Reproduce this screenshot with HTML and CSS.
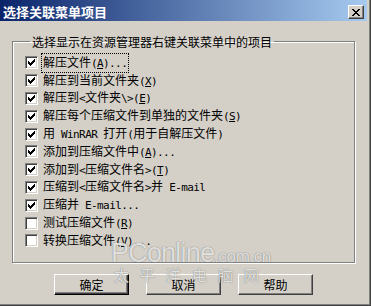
FILE: index.html
```html
<!doctype html>
<html>
<head>
<meta charset=utf-8>
<title>选择关联菜单项目</title>
<link rel="stylesheet" href="styles.css">
</head>
<body>

<div class="window">
  <header class="titlebar">
    <span class="title">选择关联菜单项目</span>
    <span class="close"><svg width="8" height="7" viewBox="0 0 8 7"><path d="M0 0h2v1h-2z M6 0h2v1h-2z M1 1h2v1h-2z M5 1h2v1h-2z M2 2h4v1h-4z M3 3h2v1h-2z M2 4h4v1h-4z M1 5h2v1h-2z M5 5h2v1h-2z M0 6h2v1h-2z M6 6h2v1h-2z"/></svg></span>
  </header>

  <div class="client">
    <fieldset class="group">
      <legend>选择显示在资源管理器右键关联菜单中的项目</legend>
      <ul class="opts">
        <li><span class="cb"><svg viewBox="0 0 7 7"><path d="M6 0h1v1h-1z M5 1h2v1h-2z M0 2h1v1h-1z M4 2h3v1h-3z M0 3h2v1h-2z M3 3h3v1h-3z M0 4h5v1h-5z M1 5h3v1h-3z M2 6h1v1h-1z"/></svg></span><span class="lbl focus">解压文件<span class="en">(<u>A</u>)...</span></span></li>
        <li><span class="cb"><svg viewBox="0 0 7 7"><path d="M6 0h1v1h-1z M5 1h2v1h-2z M0 2h1v1h-1z M4 2h3v1h-3z M0 3h2v1h-2z M3 3h3v1h-3z M0 4h5v1h-5z M1 5h3v1h-3z M2 6h1v1h-1z"/></svg></span><span class="lbl">解压到当前文件夹<span class="en">(<u>X</u>)</span></span></li>
        <li><span class="cb"><svg viewBox="0 0 7 7"><path d="M6 0h1v1h-1z M5 1h2v1h-2z M0 2h1v1h-1z M4 2h3v1h-3z M0 3h2v1h-2z M3 3h3v1h-3z M0 4h5v1h-5z M1 5h3v1h-3z M2 6h1v1h-1z"/></svg></span><span class="lbl">解压到<span class="en">&lt;</span>文件夹<span class="en">\&gt;(<u>E</u>)</span></span></li>
        <li><span class="cb"><svg viewBox="0 0 7 7"><path d="M6 0h1v1h-1z M5 1h2v1h-2z M0 2h1v1h-1z M4 2h3v1h-3z M0 3h2v1h-2z M3 3h3v1h-3z M0 4h5v1h-5z M1 5h3v1h-3z M2 6h1v1h-1z"/></svg></span><span class="lbl">解压每个压缩文件到单独的文件夹<span class="en">(<u>S</u>)</span></span></li>
        <li><span class="cb"><svg viewBox="0 0 7 7"><path d="M6 0h1v1h-1z M5 1h2v1h-2z M0 2h1v1h-1z M4 2h3v1h-3z M0 3h2v1h-2z M3 3h3v1h-3z M0 4h5v1h-5z M1 5h3v1h-3z M2 6h1v1h-1z"/></svg></span><span class="lbl">用<span class="en"> WinRAR </span>打开<span class="en">(</span>用于自解压文件<span class="en">)</span></span></li>
        <li><span class="cb"><svg viewBox="0 0 7 7"><path d="M6 0h1v1h-1z M5 1h2v1h-2z M0 2h1v1h-1z M4 2h3v1h-3z M0 3h2v1h-2z M3 3h3v1h-3z M0 4h5v1h-5z M1 5h3v1h-3z M2 6h1v1h-1z"/></svg></span><span class="lbl">添加到压缩文件中<span class="en">(<u>A</u>)...</span></span></li>
        <li><span class="cb"><svg viewBox="0 0 7 7"><path d="M6 0h1v1h-1z M5 1h2v1h-2z M0 2h1v1h-1z M4 2h3v1h-3z M0 3h2v1h-2z M3 3h3v1h-3z M0 4h5v1h-5z M1 5h3v1h-3z M2 6h1v1h-1z"/></svg></span><span class="lbl">添加到<span class="en">&lt;</span>压缩文件名<span class="en">&gt;(<u>T</u>)</span></span></li>
        <li><span class="cb"><svg viewBox="0 0 7 7"><path d="M6 0h1v1h-1z M5 1h2v1h-2z M0 2h1v1h-1z M4 2h3v1h-3z M0 3h2v1h-2z M3 3h3v1h-3z M0 4h5v1h-5z M1 5h3v1h-3z M2 6h1v1h-1z"/></svg></span><span class="lbl">压缩到<span class="en">&lt;</span>压缩文件名<span class="en">&gt;</span>并<span class="en"> E-mail</span></span></li>
        <li><span class="cb"><svg viewBox="0 0 7 7"><path d="M6 0h1v1h-1z M5 1h2v1h-2z M0 2h1v1h-1z M4 2h3v1h-3z M0 3h2v1h-2z M3 3h3v1h-3z M0 4h5v1h-5z M1 5h3v1h-3z M2 6h1v1h-1z"/></svg></span><span class="lbl">压缩并<span class="en"> E-mail...</span></span></li>
        <li><span class="cb"></span><span class="lbl">测试压缩文件<span class="en">(<u>R</u>)</span></span></li>
        <li><span class="cb"></span><span class="lbl">转换压缩文件<span class="en">(<u>V</u>)...</span></span></li>
      </ul>
    </fieldset>

    <nav class="buttons">
      <button class="btn default">确定</button>
      <button class="btn">取消</button>
      <button class="btn">帮助</button>
    </nav>
  </div>

  <div class="watermark">
    <div class="wm-top">PConline<small>.com.cn</small></div>
    <div class="wm-cn">太平洋电脑网</div>
  </div>
</div>

</body>
</html>
```

FILE: styles.css
```css
body {
  margin: 0;
  padding: 0;
  font-family: "Noto Sans CJK SC", "Noto Sans", sans-serif;
  font-size: 12px;
  color: #000;
  background: #d4d0c8;
}

.window {
  position: relative;
  width: 371px;
  height: 306px;
  box-sizing: border-box;
  background: #d4d0c8;
  box-shadow: inset -1px -1px #404040, inset -2px -2px #808080;
  overflow: hidden;
}

.titlebar {
  height: 21px;
  width: 367px;
  display: flex;
  align-items: center;
  justify-content: space-between;
  background-image: linear-gradient(to right, #0a246a, #a6caf0);
}

.title {
  color: #fff;
  font-weight: bold;
  font-size: 13px;
  line-height: 15px;
  padding-left: 3px;
  padding-top: 1px;
}

.close {
  width: 16px;
  height: 14px;
  box-sizing: border-box;
  margin-right: 3px;
  margin-top: 3px;
  display: flex;
  align-items: center;
  justify-content: center;
  background: #d4d0c8;
  border: 1px solid;
  border-color: #fff #404040 #404040 #fff;
  box-shadow: inset -1px -1px #808080;
}

.close svg {
  display: block;
  margin-left: -1px;
}

.client {
  width: 367px;
}

.group {
  margin: 13px 0 0 12px;
  width: 343px;
  box-sizing: border-box;
  padding: 5px 0 12px 12px;
  border: 1px solid #808080;
  box-shadow: inset 1px 1px #fff, 1px 1px #fff;
  min-width: 0;
}

.group legend {
  margin-left: 5px;
  padding: 0 2px;
  line-height: 15px;
  font-size: 12px;
}

.opts {
  list-style: none;
  margin: 0;
  padding: 0;
}

.opts li {
  height: 17.8px;
  display: flex;
  align-items: center;
}

.cb {
  width: 13px;
  height: 13px;
  box-sizing: border-box;
  flex: none;
  background: #fff;
  border: 1px solid;
  border-color: #808080 #fff #fff #808080;
  box-shadow: inset 1px 1px #404040, inset -1px -1px #d4d0c8;
  display: flex;
  align-items: center;
  justify-content: center;
}

.cb svg {
  width: 7px;
  height: 7px;
  display: block;
}

.lbl {
  margin-left: 5px;
  line-height: 14px;
  white-space: nowrap;
}

.lbl.focus {
  outline: 1px dotted #000;
  outline-offset: 1px;
}

.en {
  font-family: "DejaVu Sans Mono", "Liberation Mono", monospace;
  font-size: 11px;
  letter-spacing: -0.6px;
}

.buttons {
  display: flex;
  gap: 17px;
  margin-top: 11px;
  padding-left: 54px;
}

.btn {
  width: 75px;
  height: 21px;
  box-sizing: border-box;
  padding: 0;
  font-family: inherit;
  font-size: 12px;
  color: #000;
  background: #d4d0c8;
  border: 1px solid;
  border-color: #fff #404040 #404040 #fff;
  box-shadow: inset -1px -1px #808080;
  border-radius: 0;
}

.btn.default {
  border-color: #fff #000 #000 #fff;
  box-shadow: inset -1px -1px #404040, inset -2px -2px #808080;
}

.watermark {
  position: absolute;
  left: 111px;
  top: 242px;
  width: 160px;
  color: rgba(250, 250, 248, 0.8);
  text-shadow: 0 0 1px rgba(120, 120, 120, 0.9), 0 0 1px rgba(120, 120, 120, 0.6);
  font-family: "Liberation Sans", Arial, sans-serif;
  pointer-events: none;
}

.wm-top {
  font-size: 27px;
  line-height: 23px;
  letter-spacing: -0.8px;
}

.wm-top small {
  font-size: 17px;
  letter-spacing: -0.4px;
}

.wm-cn {
  font-family: "Noto Sans CJK SC", sans-serif;
  font-size: 15px;
  line-height: 14px;
  letter-spacing: 11px;
  padding-left: 3px;
}
```
